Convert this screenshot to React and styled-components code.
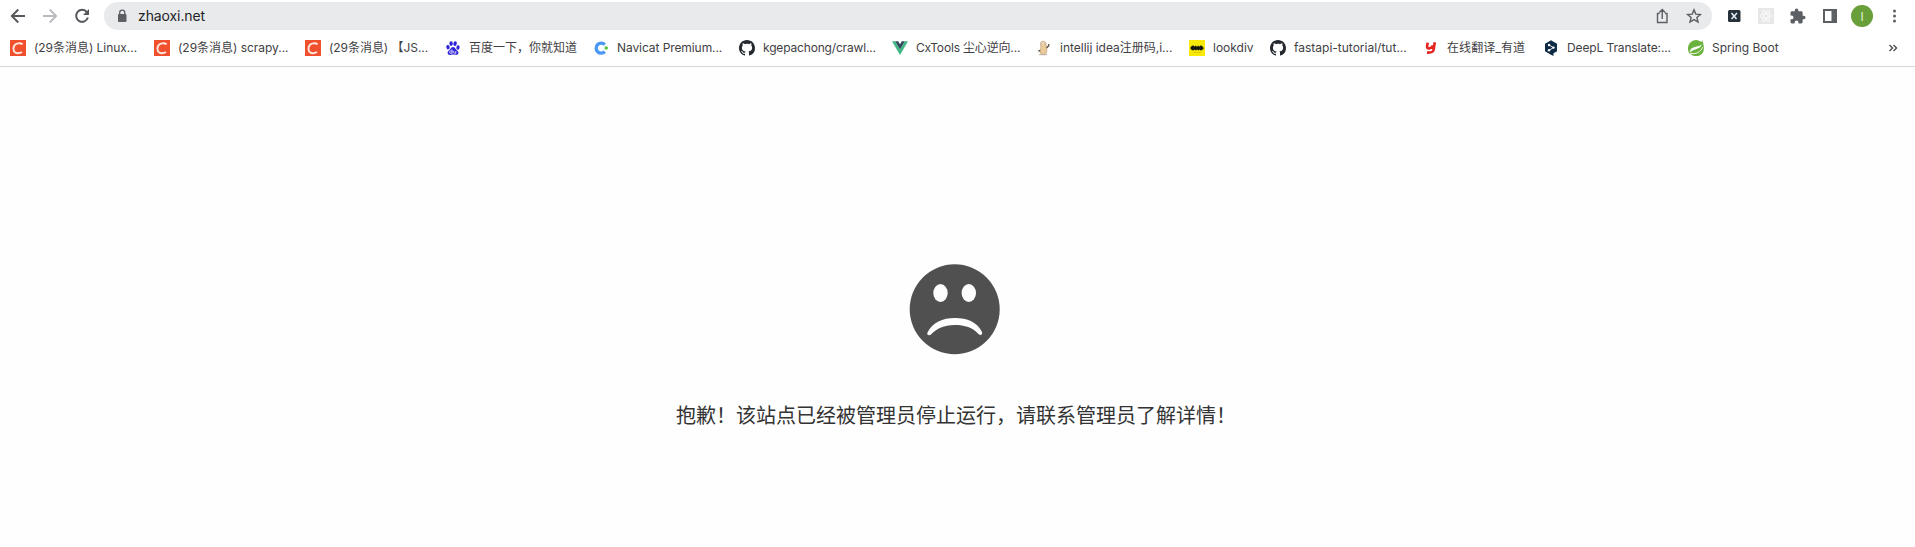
import React from 'react';
import styled, { createGlobalStyle } from 'styled-components';

const GlobalStyle = createGlobalStyle`
  * { box-sizing: border-box; }
  body {
    margin: 0;
    background: #fefefe;
    font-family: Inter, "Noto Sans CJK SC", sans-serif;
    overflow: hidden;
  }
  svg { display: block; flex: none; }
`;

const Window = styled.div`
  display: flex;
  flex-direction: column;
  height: 547px;
`;

const Toolbar = styled.header`
  display: flex;
  align-items: center;
  height: 32px;
  padding: 0 0 0 10px;
  background: #fff;
`;

const Navigation = styled.nav`
  display: flex;
  flex: none;
  gap: 16px;
  width: 94px;
`;

const AddressBar = styled.div`
  display: flex;
  align-items: center;
  flex: none;
  width: 1608px;
  height: 28px;
  padding: 0 8px 0 10px;
  border-radius: 14px;
  background: #e9eaec;
`;

const Address = styled.span`
  flex: 1;
  margin-left: 8px;
  font-size: 14px;
  line-height: 20px;
  letter-spacing: -0.1px;
  color: #222427;
`;

const AddressActions = styled.div`
  display: flex;
  gap: 12px;
`;

const Extensions = styled.div`
  display: flex;
  align-items: center;
  flex: none;
  gap: 12px;
  margin-left: 12px;
`;

const Avatar = styled.div`
  display: flex;
  align-items: center;
  justify-content: center;
  width: 22px;
  height: 22px;
  margin: 0 -1px;
  border-radius: 50%;
  background: #689f38;
  color: #e4f0d8;
  font-size: 12px;
`;

const BookmarkBar = styled.div`
  display: flex;
  align-items: center;
  height: 35px;
  padding: 0 16px 2px 10px;
  border-bottom: 1px solid #d6d7d9;
  background: #fff;
`;

const Bookmark = styled.a`
  display: flex;
  align-items: center;
  flex: none;
  gap: 8px;
  width: ${(p) => p.$width}px;
`;

const BookmarkTitle = styled.span`
  font-size: 12px;
  line-height: 16px;
  white-space: nowrap;
  letter-spacing: ${(p) => p.$tracking}px;
  color: #3f4144;
`;

const Overflow = styled.span`
  display: flex;
  margin-left: auto;
`;

const Page = styled.main`
  display: flex;
  flex-direction: column;
  align-items: center;
  flex: 1;
  padding: 192px 3px 0 0;
`;

const Message = styled.p`
  margin: 45px 0 0;
  font-family: "Noto Sans CJK SC", sans-serif;
  font-size: 20px;
  line-height: 30px;
  color: #333;
`;

const Icon = ({ size = 16, box = 24, children, ...rest }) => (
  <svg width={size} height={size} viewBox={`0 0 ${box} ${box}`} fill="none" {...rest}>{children}</svg>
);

const CsdnIcon = () => (
  <Icon box={16}>
    <rect width="16" height="16" fill="#f1502f" />
    <path d="M12.6 4.4C11.5 3.4 9.8 2.9 7.9 3.4 5.3 4 3.6 6 3.5 8.6c-.1 2.8 1.4 4.6 4.2 4.6 1.6 0 3-.3 4.3-1.2" stroke="#ffe9df" strokeWidth="1.9" />
  </Icon>
);

const BaiduIcon = () => (
  <Icon box={16}>
    <g fill="#2d22d8">
      <ellipse cx="3" cy="7.2" rx="1.7" ry="2.2" transform="rotate(-12 3 7.2)" />
      <ellipse cx="6.1" cy="3.6" rx="1.7" ry="2.4" />
      <ellipse cx="10.1" cy="3.7" rx="1.7" ry="2.4" transform="rotate(12 10.1 3.7)" />
      <ellipse cx="13" cy="7.5" rx="1.6" ry="2.2" transform="rotate(10 13 7.5)" />
      <path d="M8 7c1.8 0 2.3 1.7 3.5 2.9 1.3 1.2 2.4 2 1.8 3.6-.5 1.5-2 1.5-3.3 1.2-1.3-.3-2.5-.3-3.8 0-1.5.4-3 .2-3.5-1.2-.5-1.6.7-2.5 1.9-3.6C5.800 8.700 6.300 7 8 7Z" />
    </g>
    <path d="M7.100 9.400v3.900H5.700c-1.500 0-1.500-2.300 0-2.300h1.400M8.700 11v1.500c0 .6.400.8.900.8h1.200V11" stroke="#fff" strokeWidth=".8" />
  </Icon>
);

const NavicatIcon = () => (
  <Icon box={16}>
    <path d="M11.800 4.700A5 5 0 1 0 11.800 11.600" stroke="#4b97f5" strokeWidth="3.400" />
    <circle cx="13.200" cy="8" r="1.800" fill="#55c83e" />
  </Icon>
);

const GithubIcon = () => (
  <Icon box={16}>
    <path fill="#24292f" d="M8 0C3.580 0 0 3.580 0 8c0 3.540 2.290 6.530 5.470 7.590.4.070.55-.17.55-.38 0-.19-.01-.82-.01-1.490-2.010.37-2.530-.49-2.690-.94-.09-.23-.48-.94-.82-1.130-.28-.15-.68-.52-.01-.53.63-.01 1.080.58 1.230.82.72 1.210 1.870.87 2.330.66.07-.52.28-.87.51-1.070-1.780-.2-3.640-.89-3.640-3.950 0-.87.31-1.590.82-2.150-.08-.2-.36-1.020.08-2.120 0 0 .67-.21 2.200.82.64-.18 1.320-.27 2-.27s1.360.09 2 .27c1.530-1.040 2.200-.82 2.200-.82.44 1.100.16 1.920.08 2.120.51.56.82 1.270.82 2.150 0 3.070-1.870 3.750-3.650 3.950.29.25.54.73.54 1.480 0 1.070-.01 1.930-.01 2.200 0 .21.15.46.55.38A8.010 8.010 0 0 0 16 8c0-4.420-3.580-8-8-8Z" />
  </Icon>
);

const VueIcon = () => (
  <Icon box={16}>
    <path d="M0 1.200h3.200L8 9.500l4.800-8.300H16L8 15Z" fill="#41b883" />
    <path d="M3.200 1.200h3L8 4.300l1.800-3.100h3L8 9.500Z" fill="#35495e" />
  </Icon>
);

const GopherIcon = () => (
  <Icon box={16}>
    <path d="M5 2C6.300.7 9.200 1 9.900 3c.5 1.700.1 3.200.6 5 .7 2.400.4 5.300-1.500 6.200-1.600.7-4 .4-4.700-1.200-.7-1.800.3-3.300.5-5.200.2-2-1-4.300.2-5.800Z" fill="#ecc999" stroke="#b99668" strokeWidth=".6" />
    <path d="M10.500 8 12.700 5.700M12.700 4v2.400M2.400 11l1.800-.5" stroke="#5f4f40" strokeWidth="1.300" />
    <circle cx="5.800" cy="3.400" r=".9" fill="#fff" /><circle cx="8.300" cy="3.300" r=".9" fill="#fff" />
    <circle cx="5.800" cy="3.500" r=".4" fill="#333" /><circle cx="8.300" cy="3.400" r=".4" fill="#333" />
    <path d="M3 14.700h8" stroke="#aaa29a" strokeWidth=".8" />
  </Icon>
);

const BatIcon = () => (
  <Icon box={16}>
    <rect width="16" height="16" fill="#f8ea08" />
    <path d="M1.300 8.200C1.800 6.600 3 6 4.400 5.300l.8 1.400 1.100-1.300 1 1.400.7-1.400.8 1.400 1-1.400 1 1.300.9-1.400c1.400.7 2.600 1.500 3 2.900-.6 1.400-1.800 1.900-3.100 2.200l-1-1-1.200 1.100-1.400-.9-1.300.9-1.200-1.100-1 1c-1.400-.3-2.700-.9-3.200-2.200Z" fill="#17180d" />
    <path d="M4 12.500h8" stroke="#d6bd12" strokeWidth=".7" />
  </Icon>
);

const YoudaoIcon = () => (
  <Icon box={16}>
    <path d="M4.700 2.600 4.100 6.300c-.2 1.700.7 2.400 2.300 2.100 1.500-.3 3-1.500 3.500-3M11.800 2.200l-1.100 7.200c-.4 2.700-2 3.500-6.700 3.200" stroke="#e2231f" strokeWidth="2.600" />
  </Icon>
);

const DeeplIcon = () => (
  <Icon box={16}>
    <path d="M8 .3 14 3.700v7.500l-3.500 2V16l-3-1.600L2 11.200V3.700Z" fill="#0f2b46" />
    <path d="m6 5 4.500 2.600L6 10.300" stroke="#fff" strokeWidth=".9" />
    <g fill="#fff"><circle cx="6" cy="5" r="1.200" /><circle cx="10.500" cy="7.600" r="1.200" /><circle cx="6" cy="10.300" r="1.200" /></g>
  </Icon>
);

const SpringIcon = () => (
  <Icon box={16}>
    <path d="M14.300.3c-.3.800-.6 1.300-1 1.800A8 8 0 0 0 .2 6.500C-.5 10 .7 13 3.300 14.800c3.400 2.300 8.700 1.700 11.300-1.900C16.800 9.500 15.800 5 14.300.3Z" fill="#6cb33e" />
    <path d="M13.900 4C12 7.600 5.400 5.400 2.600 9.500c-.6 1-.6 2.100-.3 2.900C5.200 8.400 12.200 10.300 13.900 4Z" fill="#fff" />
    <path d="M3 13.500c5 .8 9.600-1.300 11.600-6.300" stroke="#fff" strokeWidth=".9" />
    <circle cx="3" cy="13.500" r=".8" fill="#fff" />
  </Icon>
);

const bookmarks = [
  { title: '(29条消息) Linux...', icon: CsdnIcon, width: 144, tracking: -0.04 },
  { title: '(29条消息) scrapy...', icon: CsdnIcon, width: 151, tracking: -0.03 },
  { title: '(29条消息) 【JS...', icon: CsdnIcon, width: 140, tracking: -0.05 },
  { title: '百度一下，你就知道', icon: BaiduIcon, width: 148 },
  { title: 'Navicat Premium...', icon: NavicatIcon, width: 146, tracking: -0.08 },
  { title: 'kgepachong/crawl...', icon: GithubIcon, width: 153, tracking: -0.17 },
  { title: 'CxTools 尘心逆向...', icon: VueIcon, width: 144, tracking: -0.17 },
  { title: 'intellij idea注册码,i...', icon: GopherIcon, width: 153, tracking: -0.01 },
  { title: 'lookdiv', icon: BatIcon, width: 81 },
  { title: 'fastapi-tutorial/tut...', icon: GithubIcon, width: 153 },
  { title: '在线翻译_有道', icon: YoudaoIcon, width: 120, tracking: 0.1 },
  { title: 'DeepL Translate:...', icon: DeeplIcon, width: 145, tracking: -0.12 },
  { title: 'Spring Boot', icon: SpringIcon, width: 100 },
];

export default function App() {
  return (
    <Window>
      <GlobalStyle />
      <Toolbar>
        <Navigation>
          <Icon box={16}><path d="M15 8H2M8.300 1.500 1.800 8l6.500 6.500" stroke="#54575b" strokeWidth="1.900" /></Icon>
          <Icon box={16}><path d="M1 8h13M7.700 1.500 14.200 8l-6.500 6.500" stroke="#b9bbbe" strokeWidth="1.900" /></Icon>
          <Icon box={16}>
            <path d="M12.900 4.100A6 6 0 1 0 13.900 9.500" stroke="#54575b" strokeWidth="2" />
            <path d="M15 1v6H9Z" fill="#54575b" />
          </Icon>
        </Navigation>
        <AddressBar>
          <Icon box={16}>
            <rect x="4" y="6" width="8.500" height="8" rx="1" fill="#5c5f63" />
            <path d="M5.700 6.500V4.700a2.550 2.550 0 0 1 5.100 0v1.800" stroke="#5c5f63" strokeWidth="1.300" />
          </Icon>
          <Address>zhaoxi.net</Address>
          <AddressActions>
            <Icon size={20} box={20}>
              <path d="M7.500 7.500h-2v9h9.500v-9h-2M10.250 13V3.700M7.300 6.500l2.950-2.900 2.950 2.900" stroke="#5c5f63" strokeWidth="1.400" />
            </Icon>
            <Icon size={20} box={20}>
              <path d="m10 3.900 1.800 4.200 4.600.4-3.500 3 1.100 4.500-4-2.400L6 16l1.100-4.500-3.500-3 4.600-.4Z" stroke="#5c5f63" strokeWidth="1.400" />
            </Icon>
          </AddressActions>
        </AddressBar>
        <Extensions>
          <Icon size={20} box={20}>
            <rect x="4" y="4" width="12.500" height="12" rx="1.500" fill="#27313b" />
            <path d="m7.500 7 5 6M13 7l-5.500 6" stroke="#e2edf2" strokeWidth="1.600" />
          </Icon>
          <Icon size={20} box={20}>
            <rect x="2" y="2" width="16" height="16" fill="#e7e7e7" />
            <g stroke="#fafafa"><ellipse cx="10" cy="10" rx="6" ry="2.200" /><ellipse cx="10" cy="10" rx="6" ry="2.200" transform="rotate(60 10 10)" /><ellipse cx="10" cy="10" rx="6" ry="2.200" transform="rotate(120 10 10)" /></g>
          </Icon>
          <Icon size={20} box={28}>
            <g transform="translate(1.500 2.500)"><path fill="#5c5f63" d="M20.500 11H19V7c0-1.100-.9-2-2-2h-4V3.500a2.500 2.500 0 0 0-5 0V5H4c-1.100 0-2 .9-2 2v3.800h1.500a2.700 2.700 0 0 1 0 5.400H2V20c0 1.100.9 2 2 2h3.800v-1.500a2.700 2.700 0 0 1 5.400 0V22H17c1.100 0 2-.9 2-2v-4h1.500a2.500 2.500 0 0 0 0-5Z" /></g>
          </Icon>
          <Icon size={20} box={20}>
            <path d="M3 3h14v14H3Z" fill="#5c5f63" /><path d="M5 5h6.500v10H5Z" fill="#fff" />
          </Icon>
          <Avatar>I</Avatar>
          <Icon size={20} box={20}>
            <g fill="#5c5f63"><circle cx="10.500" cy="5" r="1.500" /><circle cx="10.500" cy="10" r="1.500" /><circle cx="10.500" cy="15" r="1.500" /></g>
          </Icon>
        </Extensions>
      </Toolbar>
      <BookmarkBar>
        {bookmarks.map(({ title, icon: Favicon, width, tracking = 0 }) => (
          <Bookmark key={title} $width={width}>
            <Favicon />
            <BookmarkTitle $tracking={tracking}>{title}</BookmarkTitle>
          </Bookmark>
        ))}
        <Overflow>
          <Icon size={12} box={12}><path d="m2.500 3 3 3-3 3M6.500 3l3 3-3 3" stroke="#4c4f53" strokeWidth="1.400" /></Icon>
        </Overflow>
      </BookmarkBar>
      <Page>
        <Icon size={96} box={96}>
          <circle cx="46.700" cy="50.200" r="45" fill="#505050" />
          <g fill="#fefefe" transform="translate(1.500 0)">
            <ellipse cx="31" cy="34" rx="7.200" ry="9" />
            <ellipse cx="59.300" cy="34" rx="7.200" ry="9" />
            <path d="M18 73.500C23 63.500 33 59 45.500 59S67.500 63 72.500 73c1 3-2 4-3.500 2-6-6.500-13.500-9-24-9s-17.500 3.500-23.500 9.500c-2.200 1.800-4.500.3-3.500-2Z" />
          </g>
        </Icon>
        <Message>抱歉！该站点已经被管理员停止运行，请联系管理员了解详情！</Message>
      </Page>
    </Window>
  );
}
